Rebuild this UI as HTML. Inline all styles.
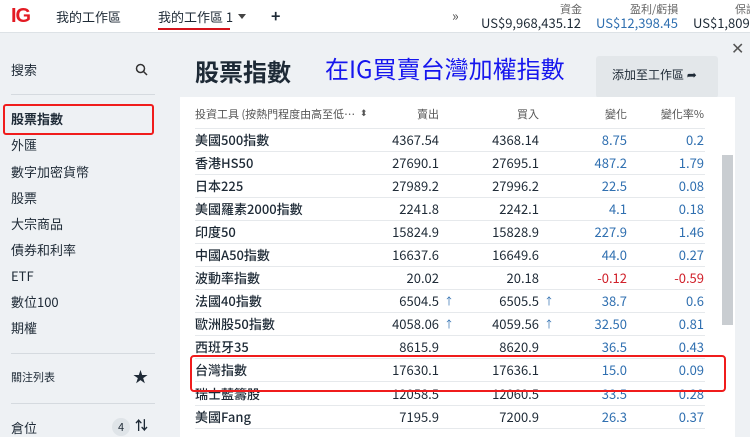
<!DOCTYPE html>
<html><head><meta charset="utf-8"><style>
*{margin:0;padding:0;box-sizing:border-box}
body{width:750px;height:436px;overflow:hidden;background:#eef1f4;font-family:"Noto Sans CJK TC","Liberation Sans",sans-serif;color:#1e2a36;position:relative;line-height:1.2}
.top{position:absolute;left:0;top:0;width:750px;height:33px;background:#fff;border-bottom:1px solid #dde2e6}
.abs{position:absolute;white-space:nowrap}
.side{font-size:13px;line-height:16px}
.line{position:absolute;left:11px;width:144px;height:1px;background:#d5dadf}
.panel{position:absolute;left:180px;top:97px;width:555px;height:340px;background:#fff}
.row{position:absolute;left:195px;width:510px;height:23px;border-bottom:1px solid #e6e9ec;font-size:13px}
.row span{position:absolute;top:3px;line-height:16px}
.n{left:0;font-weight:500}.s{right:266px}.b{right:166px}.c{right:78px;color:#2f6fb0}.p{right:1px;color:#2f6fb0}
.r{color:#d0202a!important}
.ar{position:absolute;color:#2f6fb0;font-size:10px}
</style></head><body>
<div class="top"></div>
<div class="abs" style="left:11px;top:4px;font-size:20px;font-weight:bold;color:#e31b23;letter-spacing:-1px;font-family:'Liberation Sans',sans-serif">IG</div>
<div class="abs" style="left:56px;top:9px;font-size:13px">我的工作區</div>
<div class="abs" style="left:158px;top:9px;font-size:13px">我的工作區 1</div>
<div class="abs" style="left:238px;top:14px;width:0;height:0;border-left:4px solid transparent;border-right:4px solid transparent;border-top:5px solid #444"></div>
<div class="abs" style="left:158px;top:28px;width:72px;height:2px;background:#d4141c"></div>
<div class="abs" style="left:271px;top:6px;font-size:16px;font-weight:bold">+</div>
<div class="abs" style="left:452px;top:8px;font-size:14px;color:#555">»</div>
<div class="abs" style="left:560px;top:3px;font-size:11px;color:#666">資金</div>
<div class="abs" style="left:481px;top:15px;font-size:13px">US$9,968,435.12</div>
<div class="abs" style="left:630px;top:3px;font-size:11px;color:#666">盈利/虧損</div>
<div class="abs" style="left:596px;top:15px;font-size:13px;color:#2f6fb0">US$12,398.45</div>
<div class="abs" style="left:735px;top:3px;font-size:11px;color:#666">保證</div>
<div class="abs" style="left:693px;top:15px;font-size:13px">US$1,809.</div>

<div class="abs side" style="left:11px;top:62px">搜索</div>
<svg class="abs" style="left:135px;top:63px" width="13" height="13" viewBox="0 0 13 13"><circle cx="5.5" cy="5.5" r="4" fill="none" stroke="#333" stroke-width="1.5"/><path d="M8.5 8.5L12 12" stroke="#333" stroke-width="1.5"/></svg>
<div class="line" style="top:94px"></div>
<div class="abs" style="left:3px;top:104px;width:151px;height:31px;border:2.5px solid #f01c1c;border-radius:3px"></div>
<div class="abs side" style="left:11px;top:111px;font-weight:bold">股票指數</div>
<div class="abs side" style="left:11px;top:137px">外匯</div>
<div class="abs side" style="left:11px;top:164px">數字加密貨幣</div>
<div class="abs side" style="left:11px;top:190px">股票</div>
<div class="abs side" style="left:11px;top:216px">大宗商品</div>
<div class="abs side" style="left:11px;top:242px">債券和利率</div>
<div class="abs side" style="left:11px;top:268px">ETF</div>
<div class="abs side" style="left:11px;top:294px">數位100</div>
<div class="abs side" style="left:11px;top:320px">期權</div>
<div class="line" style="top:353px"></div>
<div class="abs" style="left:11px;top:371px;font-size:11px">關注列表</div>
<div class="abs" style="left:133px;top:368px;font-size:15px">★</div>
<div class="line" style="top:403px"></div>
<div class="abs side" style="left:11px;top:420px">倉位</div>
<div class="abs" style="left:112px;top:418px;width:18px;height:18px;border-radius:9px;background:#dfe4e8;font-size:11px;text-align:center;line-height:18px">4</div>
<div class="abs" style="left:135px;top:417px;font-size:13px;font-weight:bold">⇅</div>

<div class="abs" style="left:195px;top:56px;font-size:24px;font-weight:bold;color:#1e2a36;line-height:30px">股票指數</div>
<div class="abs" style="left:325px;top:53px;font-size:24px;color:#1616ee;line-height:30px">在IG買賣台灣加權指數</div>
<div class="abs" style="left:596px;top:56px;width:122px;height:42px;background:#e3e7ea;border-radius:3px"></div>
<div class="abs" style="left:612px;top:68px;font-size:12px">添加至工作區 ➦</div>
<div class="abs" style="left:731px;top:38px;font-size:16px;color:#555">✕</div>

<div class="panel"></div>
<div class="abs" style="left:722px;top:155px;width:11px;height:170px;background:#c9cdd1"></div>
<div class="abs" style="left:195px;top:108px;width:510px;height:21px;border-bottom:1px solid #e6e9ec;font-size:11px;color:#555">
<span class="abs" style="left:0">投資工具 (按熱門程度由高至低…</span><span class="abs" style="left:165px;font-size:9px">⬍</span>
<span class="abs" style="right:266px">賣出</span><span class="abs" style="right:166px">買入</span><span class="abs" style="right:78px">變化</span><span class="abs" style="right:1px">變化率%</span></div>

<div class="row" style="top:129px"><span class="n">美國500指數</span><span class="s">4367.54</span><span class="b">4368.14</span><span class="c">8.75</span><span class="p">0.2</span></div>
<div class="row" style="top:152px"><span class="n">香港HS50</span><span class="s">27690.1</span><span class="b">27695.1</span><span class="c">487.2</span><span class="p">1.79</span></div>
<div class="row" style="top:175px"><span class="n">日本225</span><span class="s">27989.2</span><span class="b">27996.2</span><span class="c">22.5</span><span class="p">0.08</span></div>
<div class="row" style="top:198px"><span class="n">美國羅素2000指數</span><span class="s">2241.8</span><span class="b">2242.1</span><span class="c">4.1</span><span class="p">0.18</span></div>
<div class="row" style="top:221px"><span class="n">印度50</span><span class="s">15824.9</span><span class="b">15828.9</span><span class="c">227.9</span><span class="p">1.46</span></div>
<div class="row" style="top:244px"><span class="n">中國A50指數</span><span class="s">16637.6</span><span class="b">16649.6</span><span class="c">44.0</span><span class="p">0.27</span></div>
<div class="row" style="top:267px"><span class="n">波動率指數</span><span class="s">20.02</span><span class="b">20.18</span><span class="c r">-0.12</span><span class="p r">-0.59</span></div>
<div class="row" style="top:290px"><span class="n">法國40指數</span><span class="s">6504.5</span><span class="ar" style="left:249px">↑</span><span class="b">6505.5</span><span class="ar" style="left:349px">↑</span><span class="c">38.7</span><span class="p">0.6</span></div>
<div class="row" style="top:313px"><span class="n">歐洲股50指數</span><span class="s">4058.06</span><span class="ar" style="left:249px">↑</span><span class="b">4059.56</span><span class="ar" style="left:349px">↑</span><span class="c">32.50</span><span class="p">0.81</span></div>
<div class="row" style="top:336px"><span class="n">西班牙35</span><span class="s">8615.9</span><span class="b">8620.9</span><span class="c">36.5</span><span class="p">0.43</span></div>
<div class="row" style="top:359px"><span class="n">台灣指數</span><span class="s">17630.1</span><span class="b">17636.1</span><span class="c">15.0</span><span class="p">0.09</span></div>
<div class="row" style="top:383px"><span class="n">瑞士藍籌股</span><span class="s">12058.5</span><span class="b">12060.5</span><span class="c">33.5</span><span class="p">0.28</span></div>
<div class="row" style="top:406px"><span class="n">美國Fang</span><span class="s">7195.9</span><span class="b">7200.9</span><span class="c">26.3</span><span class="p">0.37</span></div>
<div class="abs" style="left:190px;top:355px;width:536px;height:37px;border:2.5px solid #f01c1c;border-radius:4px"></div>
</body></html>
